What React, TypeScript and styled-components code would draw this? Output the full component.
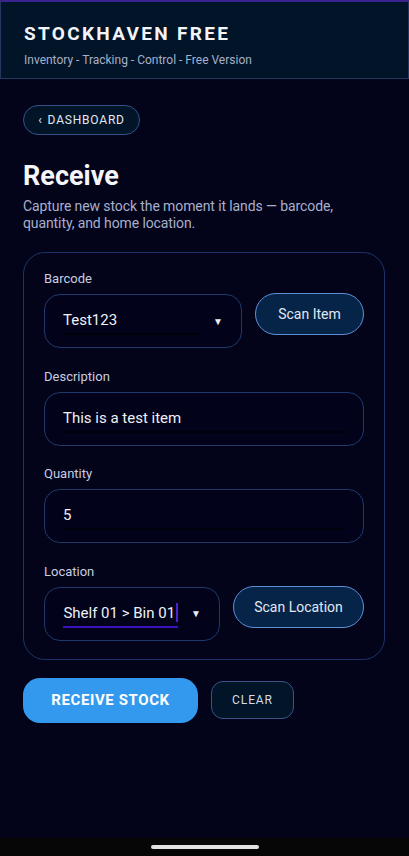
import styled, { createGlobalStyle } from 'styled-components';

const GlobalStyle = createGlobalStyle`
  html, body {
    margin: 0;
    padding: 0;
    background: #03031a;
  }
  * {
    box-sizing: border-box;
  }
  body {
    font-family: Roboto, 'Liberation Sans', sans-serif;
    color: #f0f2f8;
  }
`;

const Page = styled.div`
  min-height: 856px;
  background: #03031a;
  display: flex;
  flex-direction: column;
`;

const Header = styled.header`
  height: 79px;
  background: #021428;
  border: 1px solid #26365e;
  border-top: 2px solid #3b2391;
  padding: 20px 23px 0;
  display: flex;
  flex-direction: column;
  gap: 6px;
`;

const Brand = styled.h1`
  margin: 0;
  font-size: 19px;
  line-height: 24px;
  font-weight: 700;
  letter-spacing: 2.3px;
  color: #f2f4f8;
`;

const Tagline = styled.p`
  margin: 0;
  font-size: 12px;
  line-height: 16px;
  color: #a6b0c8;
`;

const Main = styled.main`
  padding: 26px 23px 40px;
  display: flex;
  flex-direction: column;
  align-items: flex-start;
`;

const BackButton = styled.button`
  height: 30px;
  width: 117px;
  border-radius: 15px;
  border: 1px solid #34528a;
  background: #021428;
  color: #e2e8f2;
  font-family: Roboto, 'Liberation Sans', sans-serif;
  font-size: 12px;
  letter-spacing: 0.8px;
  display: flex;
  align-items: center;
  justify-content: center;
  gap: 5px;
  padding: 0;
`;

const Title = styled.h2`
  margin: 25px 0 0;
  font-size: 27px;
  line-height: 32px;
  font-weight: 700;
  color: #f4f6fa;
`;

const Lead = styled.p`
  margin: 6px 0 0;
  font-size: 14px;
  line-height: 17px;
  letter-spacing: -0.1px;
  color: #a8b0cc;
`;

const Card = styled.section`
  margin-top: 20px;
  width: 362px;
  border: 1px solid #1c3566;
  border-radius: 22px;
  padding: 18px 20px 18px;
  display: flex;
  flex-direction: column;
  gap: 20.5px;
`;

const Field = styled.div`
  display: flex;
  flex-direction: column;
  gap: 7px;
`;

const Label = styled.label`
  font-size: 13px;
  line-height: 16px;
  color: #c8cde0;
`;

const Row = styled.div`
  display: flex;
  align-items: flex-start;
  gap: 13px;
`;

const Box = styled.div<{ $width?: number }>`
  height: 54px;
  width: ${p => (p.$width ? `${p.$width}px` : '100%')};
  border: 1px solid #1f3a6a;
  border-radius: 16px;
  background: #02021a;
  display: flex;
  align-items: center;
  padding: 0 18px;
  font-size: 15px;
  color: #eef1f6;
  gap: 13px;
`;

const Value = styled.span<{ $focused?: boolean }>`
  flex: 1;
  min-width: 0;
  height: 28px;
  display: flex;
  align-items: center;
  justify-content: ${p => (p.$focused ? 'flex-end' : 'flex-start')};
  overflow: hidden;
  white-space: nowrap;
  border-bottom: 2px solid ${p => (p.$focused ? '#3a12c0' : '#01010c')};
`;

const Caret = styled.span`
  width: 2px;
  height: 19px;
  background: #4a20d0;
  margin-left: 1px;
  flex: none;
`;

const Arrow = styled.span`
  font-size: 10px;
  color: #e8ecf4;
  flex: none;
`;

const ScanButton = styled.button<{ $width: number }>`
  width: ${p => p.$width}px;
  height: 42px;
  border-radius: 21px;
  border: 1.5px solid #5d8fd6;
  background: #062448;
  color: #e0e8f4;
  font-family: Roboto, 'Liberation Sans', sans-serif;
  font-size: 14px;
  margin-top: -1px;
  padding: 0;
  flex: none;
`;

const Actions = styled.div`
  margin-top: 18px;
  display: flex;
  align-items: center;
  gap: 13px;
`;

const PrimaryButton = styled.button`
  width: 175px;
  height: 45px;
  border-radius: 17px;
  border: none;
  background: #3399ee;
  color: #ffffff;
  font-family: Roboto, 'Liberation Sans', sans-serif;
  font-size: 15px;
  font-weight: 700;
  letter-spacing: 0.6px;
  padding: 0;
`;

const GhostButton = styled.button`
  width: 83px;
  height: 38px;
  border-radius: 12px;
  border: 1px solid #3b5488;
  background: #021428;
  color: #d4dbe8;
  font-family: Roboto, 'Liberation Sans', sans-serif;
  font-size: 12px;
  letter-spacing: 0.9px;
  padding: 0;
`;

const NavBar = styled.div`
  position: fixed;
  left: 0;
  right: 0;
  bottom: 0;
  height: 18px;
  background: #060606;
  display: flex;
  justify-content: center;
  align-items: center;
`;

const Handle = styled.div`
  width: 108px;
  height: 4px;
  border-radius: 2px;
  background: #e2e2e2;
`;

const App = () => (
  <Page>
    <GlobalStyle />
    <Header>
      <Brand>STOCKHAVEN FREE</Brand>
      <Tagline>Inventory - Tracking - Control - Free Version</Tagline>
    </Header>
    <Main>
      <BackButton>
        <span>‹</span>
        <span>DASHBOARD</span>
      </BackButton>
      <Title>Receive</Title>
      <Lead>
        Capture new stock the moment it lands — barcode, quantity, and home location.
      </Lead>
      <Card>
        <Field>
          <Label>Barcode</Label>
          <Row>
            <Box $width={198}>
              <Value>Test123</Value>
              <Arrow>▼</Arrow>
            </Box>
            <ScanButton $width={109}>Scan Item</ScanButton>
          </Row>
        </Field>
        <Field>
          <Label>Description</Label>
          <Box>
            <Value>This is a test item</Value>
          </Box>
        </Field>
        <Field>
          <Label>Quantity</Label>
          <Box>
            <Value>5</Value>
          </Box>
        </Field>
        <Field>
          <Label>Location</Label>
          <Row>
            <Box $width={176}>
              <Value $focused>
                Aisle 01 &gt; Shelf 01 &gt; Bin 01
                <Caret />
              </Value>
              <Arrow>▼</Arrow>
            </Box>
            <ScanButton $width={131}>Scan Location</ScanButton>
          </Row>
        </Field>
      </Card>
      <Actions>
        <PrimaryButton>RECEIVE STOCK</PrimaryButton>
        <GhostButton>CLEAR</GhostButton>
      </Actions>
    </Main>
    <NavBar>
      <Handle />
    </NavBar>
  </Page>
);

export default App;
